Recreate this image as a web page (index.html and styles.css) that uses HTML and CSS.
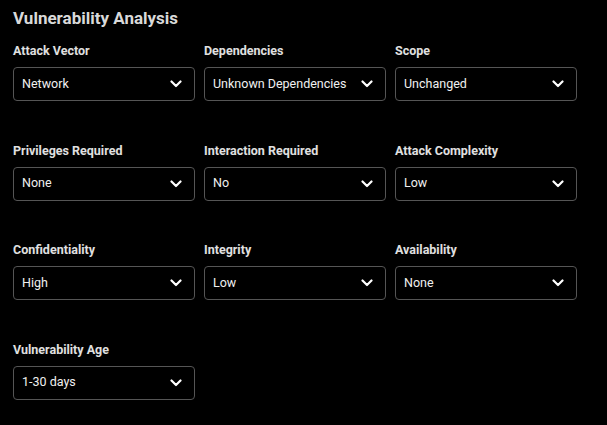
FILE: index.html
```html
<!DOCTYPE html>
<html lang="en">
<head>
    <meta charset="UTF-8">
    <title>Vulnerability Analysis</title>
    <link rel="stylesheet" href="styles.css">
</head>
<body>
<div class="panel">
    <h3>Vulnerability Analysis</h3>

    <div class="grid">
        <div class="field">
            <label>Attack Vector</label>
            <div class="select"><span>Network</span><svg viewBox="0 0 12 8"><path d="M1.5 1.5 6 6l4.5-4.5"/></svg></div>
        </div>
        <div class="field">
            <label>Dependencies</label>
            <div class="select"><span>Unknown Dependencies</span><svg viewBox="0 0 12 8"><path d="M1.5 1.5 6 6l4.5-4.5"/></svg></div>
        </div>
        <div class="field">
            <label>Scope</label>
            <div class="select"><span>Unchanged</span><svg viewBox="0 0 12 8"><path d="M1.5 1.5 6 6l4.5-4.5"/></svg></div>
        </div>

        <div class="field">
            <label>Privileges Required</label>
            <div class="select"><span>None</span><svg viewBox="0 0 12 8"><path d="M1.5 1.5 6 6l4.5-4.5"/></svg></div>
        </div>
        <div class="field">
            <label>Interaction Required</label>
            <div class="select"><span>No</span><svg viewBox="0 0 12 8"><path d="M1.5 1.5 6 6l4.5-4.5"/></svg></div>
        </div>
        <div class="field">
            <label>Attack Complexity</label>
            <div class="select"><span>Low</span><svg viewBox="0 0 12 8"><path d="M1.5 1.5 6 6l4.5-4.5"/></svg></div>
        </div>

        <div class="field">
            <label>Confidentiality</label>
            <div class="select"><span>High</span><svg viewBox="0 0 12 8"><path d="M1.5 1.5 6 6l4.5-4.5"/></svg></div>
        </div>
        <div class="field">
            <label>Integrity</label>
            <div class="select"><span>Low</span><svg viewBox="0 0 12 8"><path d="M1.5 1.5 6 6l4.5-4.5"/></svg></div>
        </div>
        <div class="field">
            <label>Availability</label>
            <div class="select"><span>None</span><svg viewBox="0 0 12 8"><path d="M1.5 1.5 6 6l4.5-4.5"/></svg></div>
        </div>

        <div class="field">
            <label>Vulnerability Age</label>
            <div class="select"><span>1-30 days</span><svg viewBox="0 0 12 8"><path d="M1.5 1.5 6 6l4.5-4.5"/></svg></div>
        </div>
    </div>
</div>
</body>
</html>
```

FILE: styles.css
```css
body {
    margin: 0;
    background-color: #000;
    color: #e6e6e6;
    font-family: Roboto, "Noto Sans", sans-serif;
}

.panel {
    padding: 7px 13px;
}

h3 {
    margin: 0;
    font-size: 17px;
    font-weight: 700;
    color: #d9d9d9;
    line-height: 22px;
}

.grid {
    display: grid;
    grid-template-columns: repeat(3, 182px);
    column-gap: 9px;
    row-gap: 41.5px;
    margin-top: 14px;
}

.field label {
    display: block;
    font-size: 12.5px;
    font-weight: 700;
    color: #e0e0e0;
    line-height: 16px;
    margin-bottom: 8px;
}

.select {
    height: 34px;
    box-sizing: border-box;
    border: 1px solid #555;
    border-radius: 4px;
    display: flex;
    align-items: center;
    justify-content: space-between;
    padding: 0 12px 2px 8px;
    font-size: 12.5px;
    color: #f0f0f0;
}

.select svg {
    width: 12px;
    height: 8px;
    margin-top: 2px;
    fill: none;
    stroke: #fff;
    stroke-width: 2.2;
    stroke-linecap: round;
    stroke-linejoin: round;
}
```
